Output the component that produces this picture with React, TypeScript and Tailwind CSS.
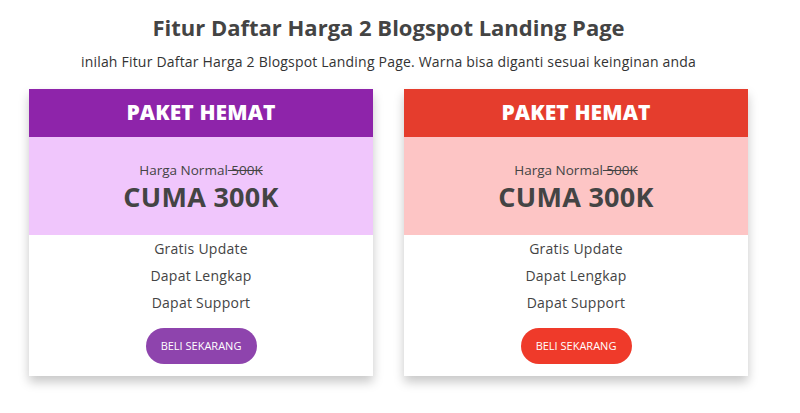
import React from 'react';

type Plan = {
  head: string;
  soft: string;
  btn: string;
};

const plans: Plan[] = [
  { head: 'bg-[#8e24aa]', soft: 'bg-[#f0c6fc]', btn: 'bg-[#8e44ad]' },
  { head: 'bg-[#e53d2d]', soft: 'bg-[#fdc5c5]', btn: 'bg-[#ef3a2a]' },
];

const features = ['Gratis Update', 'Dapat Lengkap', 'Dapat Support'];

const PriceCard: React.FC<{ plan: Plan }> = ({ plan }) => {
  return (
    <div className="w-[344px] bg-white shadow-[0_6px_10px_rgba(0,0,0,0.22)] flex flex-col items-center">
      <div className={`${plan.head} w-full h-[48px] flex items-center justify-center`}>
        <span className="text-white text-[21px] font-extrabold tracking-[0.1px]">PAKET HEMAT</span>
      </div>
      <div className={`${plan.soft} w-full h-[98px] flex flex-col items-center justify-center`}>
        <div className="text-[13.5px] leading-[19px] text-[#444]">
          Harga Normal<del> 500K</del>
        </div>
        <div className="mt-[2px] text-[27px] leading-[30px] font-bold tracking-[0.3px] text-[#444]">CUMA 300K</div>
      </div>
      <ul className="flex flex-col items-center">
        {features.map((f) => (
          <li key={f} className="text-[14px] leading-[27px] tracking-[0.25px] text-[#444]">
            {f}
          </li>
        ))}
      </ul>
      <button
        className={`${plan.btn} mt-[12px] mb-[12px] w-[111px] h-[36px] rounded-full text-white text-[11px] flex items-center justify-center`}
      >
        BELI SEKARANG
      </button>
    </div>
  );
};

export default function App() {
  return (
    <div className="w-[800px] h-[413px] bg-white font-['Open_Sans',sans-serif] text-[#444]">
      <div className="w-[777px] flex flex-col items-center">
        <h2 className="mt-[13px] text-[22px] leading-[29px] font-bold text-[#444]">
          Fitur Daftar Harga 2 Blogspot Landing Page
        </h2>
        <p className="mt-[10px] text-[14px] leading-[20px] tracking-[0.2px] text-[#333]">
          inilah Fitur Daftar Harga 2 Blogspot Landing Page. Warna bisa diganti sesuai keinginan anda
        </p>
        <div className="mt-[17px] flex gap-[31px]">
          {plans.map((p, i) => (
            <PriceCard key={i} plan={p} />
          ))}
        </div>
      </div>
    </div>
  );
}
